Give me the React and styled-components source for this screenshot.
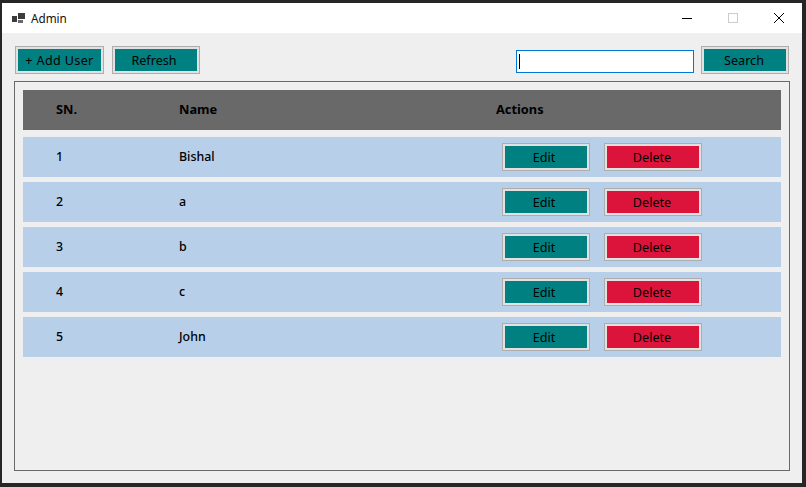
import styled, { createGlobalStyle } from 'styled-components';

const users = [
  { sn: 1, name: 'Bishal' },
  { sn: 2, name: 'a' },
  { sn: 3, name: 'b' },
  { sn: 4, name: 'c' },
  { sn: 5, name: 'John' },
];

const GlobalStyle = createGlobalStyle`
  html, body {
    margin: 0;
    height: 100%;
    background: #262626;
    overflow: hidden;
  }

  * {
    box-sizing: border-box;
  }
`;

const Window = styled.div`
  display: flex;
  flex-direction: column;
  width: 800px;
  height: 480px;
  margin: 3px 4px 4px 2px;
  background: #efefef;
  font-family: "Noto Sans", "Open Sans", sans-serif;
  color: #000;
`;

const TitleBar = styled.div`
  display: flex;
  align-items: center;
  height: 30px;
  padding-left: 10px;
  background: #fff;
`;

const AppIcon = styled.svg`
  width: 13px;
  height: 13px;
  margin-right: 6px;
`;

const TitleText = styled.span`
  flex: 1;
  font-size: 11.7px;
  color: #111;
`;

const WindowButton = styled.div`
  display: flex;
  align-items: center;
  justify-content: center;
  width: 46px;
  height: 30px;
`;

const Toolbar = styled.div`
  display: flex;
  align-items: flex-start;
  height: 28px;
  margin: 13px 13px 0 13px;
`;

const ActionButton = styled.button`
  display: block;
  width: ${(p) => p.$width || 89}px;
  height: 28px;
  margin-left: ${(p) => p.$gap || 0}px;
  padding: 3px ${(p) => p.$inset ?? 2}px 0 0;
  border: 1px solid #adadad;
  outline: 2px solid #e1e1e1;
  outline-offset: -3px;
  background: ${(p) => (p.$danger ? '#dc143c' : '#008080')};
  font-family: inherit;
  font-size: 12.6px;
  line-height: 1;
  letter-spacing: ${(p) => p.$spaced || 0}px;
  color: #000;
`;

const Spacer = styled.div`
  flex: 1;
`;

const SearchBox = styled.div`
  display: flex;
  align-items: center;
  width: 178px;
  height: 23px;
  margin: 4px 7px 0 0;
  padding-left: 2px;
  border: 1px solid #0078d7;
  background: #fff;
`;

const Caret = styled.span`
  width: 1px;
  height: 15px;
  background: #000;
`;

const Panel = styled.div`
  display: flex;
  flex: 1;
  flex-direction: column;
  gap: 5px;
  margin: 7px 12px 12px 12px;
  padding: 8px;
  border: 1px solid #696969;
`;

const HeaderRow = styled.div`
  display: grid;
  grid-template-columns: 123px 317px 1fr;
  align-items: center;
  height: 40px;
  margin-bottom: 2px;
  padding: 0 0 2px 33px;
  background: #696969;
  font-size: 12.8px;
  font-weight: 700;
`;

const Row = styled.div`
  display: grid;
  grid-template-columns: 123px 323px 1fr;
  align-items: center;
  height: 40px;
  padding-left: 33px;
  background: #b8cfe9;
  font-size: 12.4px;
  font-weight: 500;
  color: #000;
`;

const CellText = styled.span`
  margin-bottom: 2px;
`;

const RowActions = styled.div`
  display: flex;
`;

function App() {
  return (
    <Window>
      <GlobalStyle />
      <TitleBar>
        <AppIcon viewBox="0 0 13 13">
          <rect x="0" y="4" width="5" height="6" fill="#3c3c3c" />
          <rect x="6" y="1" width="7" height="6" fill="#3c3c3c" />
          <rect x="6" y="8" width="5" height="3" fill="#6a6a6a" />
        </AppIcon>
        <TitleText>Admin</TitleText>
        <WindowButton>
          <svg width="10" height="10" viewBox="0 0 10 10">
            <path d="M0 5.5H10" stroke="#000" />
          </svg>
        </WindowButton>
        <WindowButton>
          <svg width="10" height="10" viewBox="0 0 10 10">
            <rect x="0.5" y="0.5" width="9" height="9" fill="none" stroke="#cccccc" />
          </svg>
        </WindowButton>
        <WindowButton>
          <svg width="10" height="10" viewBox="0 0 10 10">
            <path d="M0 0L10 10M10 0L0 10" stroke="#000" strokeWidth="1" />
          </svg>
        </WindowButton>
      </TitleBar>

      <Toolbar>
        <ActionButton $spaced={0.35} $inset={0}>+ Add User</ActionButton>
        <ActionButton $gap={8} $width={88} $inset={4}>Refresh</ActionButton>
        <Spacer />
        <SearchBox>
          <Caret />
        </SearchBox>
        <ActionButton $width={88}>Search</ActionButton>
      </Toolbar>

      <Panel>
        <HeaderRow>
          <span>SN.</span>
          <span>Name</span>
          <span>Actions</span>
        </HeaderRow>
        {users.map((user) => (
          <Row key={user.sn}>
            <CellText>{user.sn}</CellText>
            <CellText>{user.name}</CellText>
            <RowActions>
              <ActionButton $width={88} $inset={4}>Edit</ActionButton>
              <ActionButton $width={98} $gap={14} $danger>Delete</ActionButton>
            </RowActions>
          </Row>
        ))}
      </Panel>
    </Window>
  );
}

export default App;
